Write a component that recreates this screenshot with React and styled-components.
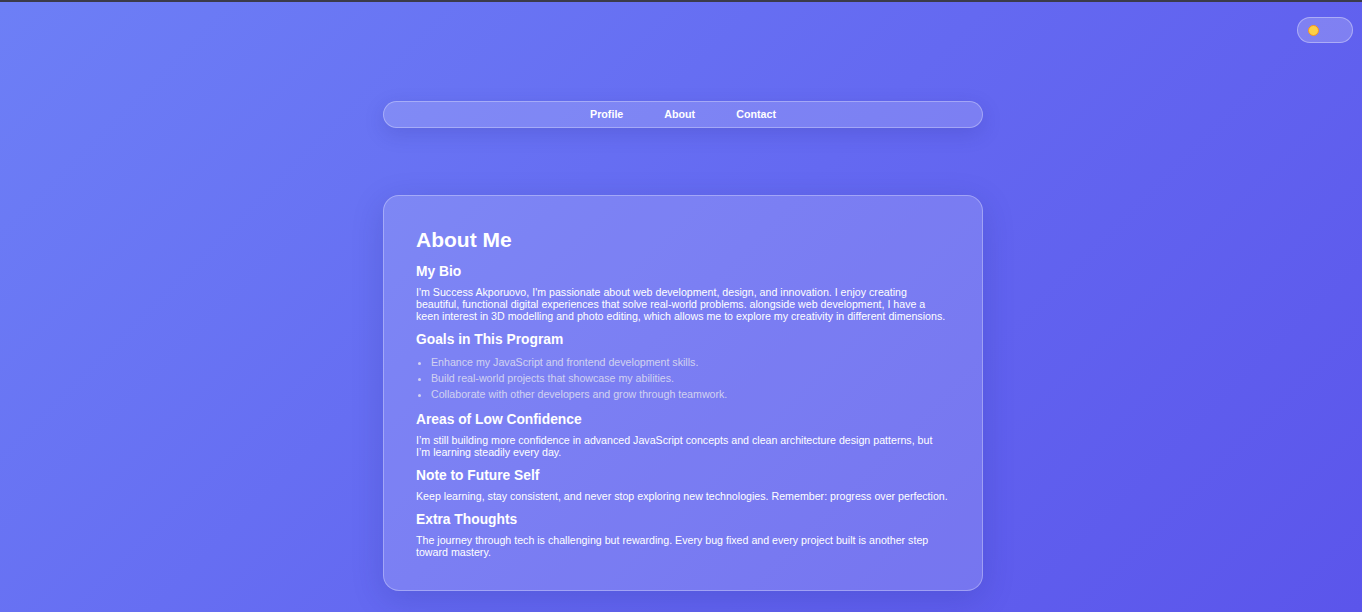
import React from 'react'
import styled, { createGlobalStyle } from 'styled-components'

const GlobalStyle = createGlobalStyle`
  * {
    box-sizing: border-box;
  }

  body {
    margin: 0;
    font-family: 'Liberation Sans', Arial, sans-serif;
  }
`

const sections = [
  {
    title: 'My Bio',
    text: "I'm Success Akporuovo, I'm passionate about web development, design, and innovation. I enjoy creating beautiful, functional digital experiences that solve real-world problems. alongside web development, I have a keen interest in 3D modelling and photo editing, which allows me to explore my creativity in different dimensions.",
  },
  {
    title: 'Goals in This Program',
    list: [
      'Enhance my JavaScript and frontend development skills.',
      'Build real-world projects that showcase my abilities.',
      'Collaborate with other developers and grow through teamwork.',
    ],
  },
  {
    title: 'Areas of Low Confidence',
    text: "I’m still building more confidence in advanced JavaScript concepts and clean architecture design patterns, but I’m learning steadily every day.",
  },
  {
    title: 'Note to Future Self',
    text: 'Keep learning, stay consistent, and never stop exploring new technologies. Remember: progress over perfection.',
  },
  {
    title: 'Extra Thoughts',
    text: 'The journey through tech is challenging but rewarding. Every bug fixed and every project built is another step toward mastery.',
  },
]

const App = () => {
  return (
    <>
      <GlobalStyle />
      <Page>
        <ThemeToggle aria-label='Toggle theme'>
          <span className='knob' />
        </ThemeToggle>

        <NavBar>
          <a href='#profile'>Profile</a>
          <a href='#about'>About</a>
          <a href='#contact'>Contact</a>
        </NavBar>

        <Card>
          <h1>About Me</h1>
          {sections.map((section, index) => {
            return (
              <Section key={index}>
                <h3>{section.title}</h3>
                {section.text && <p>{section.text}</p>}
                {section.list && (
                  <ul>
                    {section.list.map((item, i) => (
                      <li key={i}>{item}</li>
                    ))}
                  </ul>
                )}
              </Section>
            )
          })}
        </Card>
      </Page>
    </>
  )
}

const Page = styled.div`
  position: relative;
  min-height: 100vh;
  border-top: 2px solid #3b3b4a;
  background: linear-gradient(135deg, #6d7ff6 0%, #6469f1 50%, #5b55eb 100%);
  display: flex;
  flex-direction: column;
  align-items: center;
  padding: 99px 0 18px 4px;
`

const ThemeToggle = styled.button`
  position: absolute;
  top: 15px;
  right: 9px;
  width: 56px;
  height: 26px;
  padding: 0 0 0 10px;
  border-radius: 13px;
  border: 1px solid rgba(255, 255, 255, 0.35);
  background: rgba(255, 255, 255, 0.2);
  display: flex;
  align-items: center;
  cursor: pointer;

  .knob {
    width: 11px;
    height: 11px;
    border-radius: 50%;
    background: #fdd047;
    border: 1.5px solid #f7941f;
  }
`

const NavBar = styled.nav`
  width: 600px;
  height: 27px;
  border-radius: 14px;
  border: 1px solid rgba(255, 255, 255, 0.3);
  background: rgba(255, 255, 255, 0.16);
  box-shadow: 0 6px 20px rgba(40, 40, 140, 0.18);
  display: flex;
  align-items: center;
  justify-content: center;
  gap: 41px;

  a {
    color: #ffffff;
    font-size: 10.7px;
    font-weight: 700;
    line-height: 12px;
    margin-top: -1px;
    text-decoration: none;
  }
`

const Card = styled.main`
  width: 600px;
  margin-top: 67px;
  padding: 31px 33px 32px 32px;
  border-radius: 16px;
  border: 1px solid rgba(255, 255, 255, 0.3);
  background: rgba(255, 255, 255, 0.15);
  box-shadow: 0 8px 32px rgba(31, 38, 135, 0.2);
  color: #ffffff;

  h1 {
    margin: 0 0 12px;
    font-size: 21px;
    line-height: 25px;
    font-weight: 700;
  }
`

const Section = styled.section`
  & + & {
    margin-top: 10px;
  }

  h3 {
    margin: 0 0 6px;
    font-size: 13.8px;
    line-height: 16px;
    font-weight: 700;
  }

  p {
    margin: 0;
    font-size: 10.65px;
    line-height: 12px;
    font-weight: 400;
  }

  ul {
    margin: 0;
    padding-left: 15px;
  }

  li {
    font-size: 10.65px;
    line-height: 16px;
    color: rgba(225, 225, 240, 0.85);
  }
`

export default App
